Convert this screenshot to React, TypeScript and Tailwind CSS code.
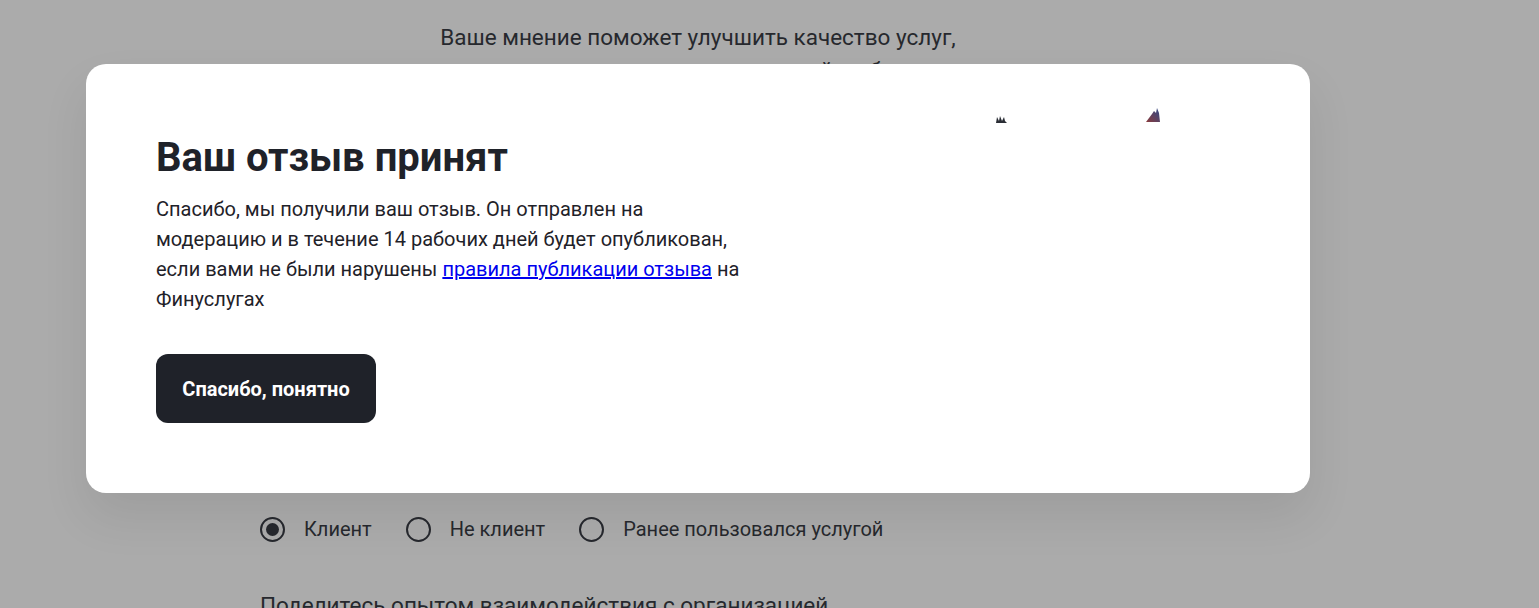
import React from "react";

function Radio({ checked, label }: { checked?: boolean; label: string }) {
  return (
    <label className="flex items-center gap-[19px]">
      <span className="w-[25px] h-[25px] rounded-full border-2 border-[#3a3d45] flex items-center justify-center">
        {checked && <span className="w-[13px] h-[13px] rounded-full bg-[#3a3d45]" />}
      </span>
      <span className="text-[20px] text-[#3a3d45]">{label}</span>
    </label>
  );
}

export default function App() {
  return (
    <div className="relative w-[1539px] h-[608px] overflow-hidden bg-white" style={{ fontFamily: "Roboto, 'Noto Sans', sans-serif" }}>
      {/* Underlying page */}
      <div className="ml-[86px] w-[1224px] flex flex-col items-center pt-[21px]">
        <p className="text-[22.5px] leading-[33px] text-[#3a3d45] text-center">
          Ваше мнение поможет улучшить качество услуг,
          <br />а другим — сделать осознанный выбор
        </p>
        <div className="h-[417px]" />
        <div className="self-start ml-[174px] flex items-center gap-[34px] mt-[10px]">
          <Radio checked label="Клиент" />
          <Radio label="Не клиент" />
          <Radio label="Ранее пользовался услугой" />
        </div>
        <p className="self-start ml-[174px] mt-[45px] text-[22.5px] leading-[32px] text-[#3a3d45]">
          Поделитесь опытом взаимодействия с организацией
        </p>
      </div>

      {/* Overlay */}
      <div className="absolute inset-0 bg-[rgba(0,0,0,0.33)]" />

      {/* Modal */}
      <div className="absolute left-[86px] top-[64px] w-[1224px] h-[429px] bg-white rounded-[20px] shadow-[0_24px_48px_rgba(0,0,0,0.08)] pl-[70px] pt-[70px]">
        <h1 className="text-[40px] leading-[48px] font-bold text-[#1f2229]">Ваш отзыв принят</h1>
        <p className="mt-[12px] w-[620px] text-[20px] leading-[30px] text-[#1f2229]">
          Спасибо, мы получили ваш отзыв. Он отправлен на
          <br />
          модерацию и в течение 14 рабочих дней будет опубликован,
          <br />
          если вами не были нарушены{" "}
          <a href="#" className="text-[#0000ee] underline">правила публикации отзыва</a> на
          <br />
          Финуслугах
        </p>
        <button className="mt-[40px] w-[220px] h-[69px] rounded-[12px] bg-[#1f2229] text-white text-[20px] font-bold">
          Спасибо, понятно
        </button>

        {/* broken image fragments */}
        <svg className="absolute left-[910px] top-[50px]" width="12" height="10" viewBox="0 0 12 10">
          <path d="M0 9 L1 3 L3 7 L4 2 L6 7 L8 3 L9 7 L11 9 Z" fill="#2a2d35" />
        </svg>
        <svg className="absolute left-[1059px] top-[43px]" width="16" height="16" viewBox="0 0 16 16">
          <defs>
            <linearGradient id="g" x1="0" y1="1" x2="1" y2="0">
              <stop offset="0" stopColor="#8a3a3a" />
              <stop offset="1" stopColor="#2e4a8a" />
            </linearGradient>
          </defs>
          <path d="M1 15 L7 7 L9 4 L11 6 L12 1 L14 6 L15 15 Z" fill="url(#g)" />
        </svg>
      </div>
    </div>
  );
}
